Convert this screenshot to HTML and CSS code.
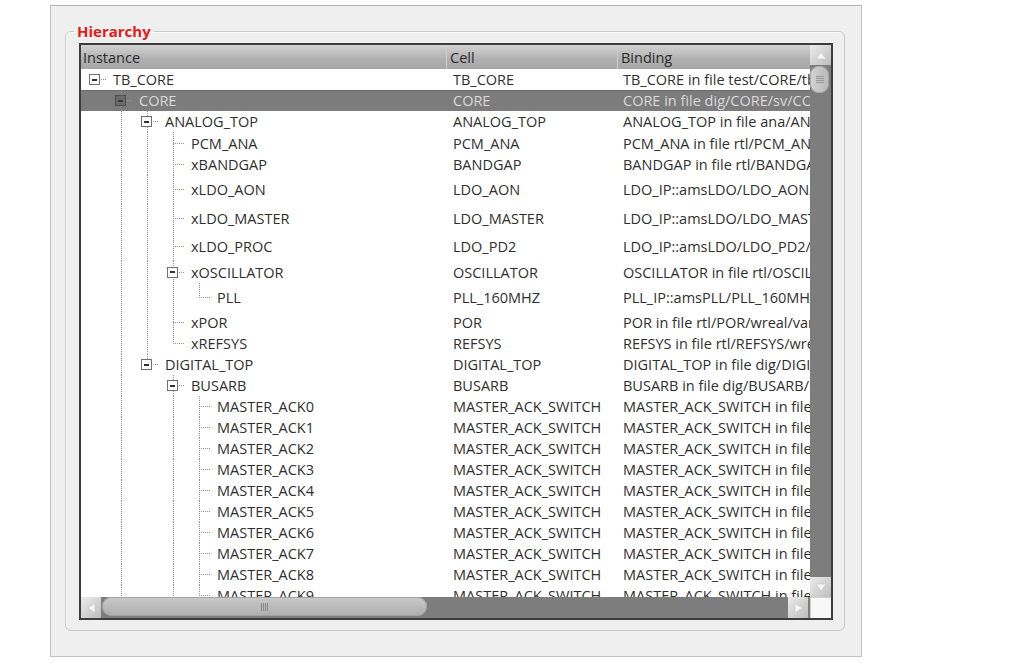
FILE: index.html
```html
<!DOCTYPE html>
<html lang="en">
<head>
  <meta charset="UTF-8" />
  <title>Hierarchy</title>
  <link rel="stylesheet" href="styles.css">
</head>
<body>

  <div class="window">
    <fieldset class="group">
      <legend>Hierarchy</legend>

      <div class="tree">
        <div class="viewport">
          <div class="header">
            <div class="hc inst">Instance</div>
            <div class="hc cell">Cell</div>
            <div class="hc bind">Binding</div>
          </div>

          <div class="row">
            <div class="c inst"><span class="g h"><i class="box"></i></span><span class="name">TB_CORE</span></div>
            <div class="c cell">TB_CORE</div>
            <div class="c bind">TB_CORE in file test/CORE/tb_core.sv</div>
          </div>
          <div class="row sel">
            <div class="c inst"><span class="g"></span><span class="g t"><i class="box"></i></span><span class="name">CORE</span></div>
            <div class="c cell">CORE</div>
            <div class="c bind">CORE in file dig/CORE/sv/CORE.sv</div>
          </div>
          <div class="row">
            <div class="c inst"><span class="g"></span><span class="g v"></span><span class="g t"><i class="box"></i></span><span class="name">ANALOG_TOP</span></div>
            <div class="c cell">ANALOG_TOP</div>
            <div class="c bind">ANALOG_TOP in file ana/ANALOG_TOP.sv</div>
          </div>
          <div class="row h22">
            <div class="c inst"><span class="g"></span><span class="g v"></span><span class="g v"></span><span class="g t"></span><span class="name">PCM_ANA</span></div>
            <div class="c cell">PCM_ANA</div>
            <div class="c bind">PCM_ANA in file rtl/PCM_ANA/pcm_ana.sv</div>
          </div>
          <div class="row">
            <div class="c inst"><span class="g"></span><span class="g v"></span><span class="g v"></span><span class="g t"></span><span class="name">xBANDGAP</span></div>
            <div class="c cell">BANDGAP</div>
            <div class="c bind">BANDGAP in file rtl/BANDGAP/bandgap.sv</div>
          </div>
          <div class="row h29">
            <div class="c inst"><span class="g"></span><span class="g v"></span><span class="g v"></span><span class="g t"></span><span class="name">xLDO_AON</span></div>
            <div class="c cell">LDO_AON</div>
            <div class="c bind">LDO_IP::amsLDO/LDO_AON/schematic</div>
          </div>
          <div class="row h28">
            <div class="c inst"><span class="g"></span><span class="g v"></span><span class="g v"></span><span class="g t"></span><span class="name">xLDO_MASTER</span></div>
            <div class="c cell">LDO_MASTER</div>
            <div class="c bind">LDO_IP::amsLDO/LDO_MASTER/schematic</div>
          </div>
          <div class="row h29">
            <div class="c inst"><span class="g"></span><span class="g v"></span><span class="g v"></span><span class="g t"></span><span class="name">xLDO_PROC</span></div>
            <div class="c cell">LDO_PD2</div>
            <div class="c bind">LDO_IP::amsLDO/LDO_PD2/schematic</div>
          </div>
          <div class="row h22">
            <div class="c inst"><span class="g"></span><span class="g v"></span><span class="g v"></span><span class="g t"><i class="box"></i></span><span class="name">xOSCILLATOR</span></div>
            <div class="c cell">OSCILLATOR</div>
            <div class="c bind">OSCILLATOR in file rtl/OSCILLATOR/osc.sv</div>
          </div>
          <div class="row h28">
            <div class="c inst"><span class="g"></span><span class="g v"></span><span class="g v"></span><span class="g v"></span><span class="g l"></span><span class="name">PLL</span></div>
            <div class="c cell">PLL_160MHZ</div>
            <div class="c bind">PLL_IP::amsPLL/PLL_160MHZ/schematic</div>
          </div>
          <div class="row h22">
            <div class="c inst"><span class="g"></span><span class="g v"></span><span class="g v"></span><span class="g t"></span><span class="name">xPOR</span></div>
            <div class="c cell">POR</div>
            <div class="c bind">POR in file rtl/POR/wreal/vams/por.sv</div>
          </div>
          <div class="row">
            <div class="c inst"><span class="g"></span><span class="g v"></span><span class="g v"></span><span class="g l"></span><span class="name">xREFSYS</span></div>
            <div class="c cell">REFSYS</div>
            <div class="c bind">REFSYS in file rtl/REFSYS/wreal/refsys.sv</div>
          </div>
          <div class="row">
            <div class="c inst"><span class="g"></span><span class="g v"></span><span class="g l"><i class="box"></i></span><span class="name">DIGITAL_TOP</span></div>
            <div class="c cell">DIGITAL_TOP</div>
            <div class="c bind">DIGITAL_TOP in file dig/DIGITAL_TOP.sv</div>
          </div>
          <div class="row">
            <div class="c inst"><span class="g"></span><span class="g v"></span><span class="g"></span><span class="g t"><i class="box"></i></span><span class="name">BUSARB</span></div>
            <div class="c cell">BUSARB</div>
            <div class="c bind">BUSARB in file dig/BUSARB/busarb.sv</div>
          </div>
          <div class="row">
            <div class="c inst"><span class="g"></span><span class="g v"></span><span class="g"></span><span class="g v"></span><span class="g t"></span><span class="name">MASTER_ACK0</span></div>
            <div class="c cell">MASTER_ACK_SWITCH</div>
            <div class="c bind">MASTER_ACK_SWITCH in file dig/BUSARB/ack.sv</div>
          </div>
          <div class="row">
            <div class="c inst"><span class="g"></span><span class="g v"></span><span class="g"></span><span class="g v"></span><span class="g t"></span><span class="name">MASTER_ACK1</span></div>
            <div class="c cell">MASTER_ACK_SWITCH</div>
            <div class="c bind">MASTER_ACK_SWITCH in file dig/BUSARB/ack.sv</div>
          </div>
          <div class="row">
            <div class="c inst"><span class="g"></span><span class="g v"></span><span class="g"></span><span class="g v"></span><span class="g t"></span><span class="name">MASTER_ACK2</span></div>
            <div class="c cell">MASTER_ACK_SWITCH</div>
            <div class="c bind">MASTER_ACK_SWITCH in file dig/BUSARB/ack.sv</div>
          </div>
          <div class="row">
            <div class="c inst"><span class="g"></span><span class="g v"></span><span class="g"></span><span class="g v"></span><span class="g t"></span><span class="name">MASTER_ACK3</span></div>
            <div class="c cell">MASTER_ACK_SWITCH</div>
            <div class="c bind">MASTER_ACK_SWITCH in file dig/BUSARB/ack.sv</div>
          </div>
          <div class="row">
            <div class="c inst"><span class="g"></span><span class="g v"></span><span class="g"></span><span class="g v"></span><span class="g t"></span><span class="name">MASTER_ACK4</span></div>
            <div class="c cell">MASTER_ACK_SWITCH</div>
            <div class="c bind">MASTER_ACK_SWITCH in file dig/BUSARB/ack.sv</div>
          </div>
          <div class="row">
            <div class="c inst"><span class="g"></span><span class="g v"></span><span class="g"></span><span class="g v"></span><span class="g t"></span><span class="name">MASTER_ACK5</span></div>
            <div class="c cell">MASTER_ACK_SWITCH</div>
            <div class="c bind">MASTER_ACK_SWITCH in file dig/BUSARB/ack.sv</div>
          </div>
          <div class="row">
            <div class="c inst"><span class="g"></span><span class="g v"></span><span class="g"></span><span class="g v"></span><span class="g t"></span><span class="name">MASTER_ACK6</span></div>
            <div class="c cell">MASTER_ACK_SWITCH</div>
            <div class="c bind">MASTER_ACK_SWITCH in file dig/BUSARB/ack.sv</div>
          </div>
          <div class="row">
            <div class="c inst"><span class="g"></span><span class="g v"></span><span class="g"></span><span class="g v"></span><span class="g t"></span><span class="name">MASTER_ACK7</span></div>
            <div class="c cell">MASTER_ACK_SWITCH</div>
            <div class="c bind">MASTER_ACK_SWITCH in file dig/BUSARB/ack.sv</div>
          </div>
          <div class="row">
            <div class="c inst"><span class="g"></span><span class="g v"></span><span class="g"></span><span class="g v"></span><span class="g t"></span><span class="name">MASTER_ACK8</span></div>
            <div class="c cell">MASTER_ACK_SWITCH</div>
            <div class="c bind">MASTER_ACK_SWITCH in file dig/BUSARB/ack.sv</div>
          </div>
          <div class="row">
            <div class="c inst"><span class="g"></span><span class="g v"></span><span class="g"></span><span class="g v"></span><span class="g t"></span><span class="name">MASTER_ACK9</span></div>
            <div class="c cell">MASTER_ACK_SWITCH</div>
            <div class="c bind">MASTER_ACK_SWITCH in file dig/BUSARB/ack.sv</div>
          </div>
        </div>

        <!-- vertical scrollbar -->
        <div class="vscroll">
          <div class="sbtn">
            <svg width="12" height="9" viewBox="0 0 12 9"><polygon points="6,1 11,8 1,8" fill="#f6f6f6" stroke="#c4c4c4" stroke-width="0.6"/></svg>
          </div>
          <div class="vhandle"><span class="grip-h"></span></div>
          <div class="track"></div>
          <div class="sbtn">
            <svg width="12" height="9" viewBox="0 0 12 9"><polygon points="1,1 11,1 6,8" fill="#f6f6f6" stroke="#c4c4c4" stroke-width="0.6"/></svg>
          </div>
        </div>

        <!-- horizontal scrollbar -->
        <div class="hscroll">
          <div class="sbtn">
            <svg width="9" height="12" viewBox="0 0 9 12"><polygon points="1,6 8,1 8,11" fill="#f6f6f6" stroke="#c4c4c4" stroke-width="0.6"/></svg>
          </div>
          <div class="hhandle"><span class="grip-v"></span></div>
          <div class="track"></div>
          <div class="sbtn">
            <svg width="9" height="12" viewBox="0 0 9 12"><polygon points="1,1 8,6 1,11" fill="#f6f6f6" stroke="#c4c4c4" stroke-width="0.6"/></svg>
          </div>
        </div>
        <div class="corner"></div>
      </div>
    </fieldset>
  </div>

</body>
</html>
```

FILE: styles.css
```css
body {
  margin: 0;
  background: #fff;
  font-family: 'Open Sans', 'DejaVu Sans', sans-serif;
  color: #2f2f2f;
}

.window {
  box-sizing: border-box;
  width: 812px;
  height: 652px;
  margin: 5px 0 0 50px;
  padding: 17px 0 0 14px;
  background: #efefef;
  border: 1px solid #c2c2c2;
  border-top-color: #b4b4b4;
}

.group {
  box-sizing: border-box;
  width: 780px;
  height: 608px;
  margin: 0;
  padding: 4px 11px 0 13px;
  border: 1px solid #c9c9c9;
  border-radius: 6px;
  box-shadow: inset 1px 1px 0 #fafafa;
}

.group legend {
  margin-left: -5px;
  padding: 0 3px;
  color: #e41b1b;
  font-weight: bold;
  font-size: 15px;
  line-height: 16px;
}

/* tree widget */
.tree {
  box-sizing: border-box;
  width: 754px;
  height: 577px;
  display: grid;
  grid-template-columns: 729px 21px;
  grid-template-rows: 552px 21px;
  border: 2px solid #3d3d3d;
  background: #fff;
}

.viewport {
  overflow: hidden;
  font-size: 14.5px;
}

.header {
  display: flex;
  height: 24px;
  background: linear-gradient(#d2d2d2, #b0b0b0 60%, #a6a6a6);
  color: #2a2a2a;
}

.hc {
  display: flex;
  align-items: center;
  padding-left: 2px;
  box-sizing: border-box;
}

.hc.cell, .hc.bind {
  border-left: 1px solid #cfcfcf;
  padding-left: 3px;
}

.row {
  display: flex;
  height: 21px;
}

.row.h22 { height: 22px; }
.row.h28 { height: 28px; }
.row.h29 { height: 29px; }

.row.sel {
  background: #7c7c7c;
  color: #d9d9d9;
  box-shadow: inset 0 1px 0 #6a6a6a;
}

.c {
  display: flex;
  align-items: center;
  white-space: nowrap;
  overflow: hidden;
  box-sizing: border-box;
}

.inst { width: 365px; flex: none; }
.cell { width: 171px; flex: none; padding-left: 7px; }
.bind { flex: 1; min-width: 0; padding-left: 6px; }

.name { margin-left: 6px; }

/* branch guides */
.g {
  flex: none;
  width: 26px;
  align-self: stretch;
  display: flex;
  align-items: center;
  background-repeat: no-repeat;
}

.g.v {
  background-image: repeating-linear-gradient(#949494 0 1px, transparent 1px 2px);
  background-size: 1px 100%;
  background-position: 14px 0;
}

.g.t {
  background-image:
    repeating-linear-gradient(#949494 0 1px, transparent 1px 2px),
    repeating-linear-gradient(to right, #949494 0 1px, transparent 1px 2px);
  background-size: 1px 100%, 12px 1px;
  background-position: 14px 0, 14px 50%;
}

.g.l {
  background-image:
    repeating-linear-gradient(#949494 0 1px, transparent 1px 2px),
    repeating-linear-gradient(to right, #949494 0 1px, transparent 1px 2px);
  background-size: 1px 50%, 12px 1px;
  background-position: 14px 0, 14px 50%;
}

.g.h {
  background-image: repeating-linear-gradient(to right, #949494 0 1px, transparent 1px 2px);
  background-size: 12px 1px;
  background-position: 14px 50%;
}

.box {
  width: 9px;
  height: 9px;
  margin-left: 8px;
  border: 1px solid #6f6f6f;
  background: #fff linear-gradient(#333, #333) no-repeat center / 5px 2px;
}

.sel .box {
  border-color: #4e4e4e;
  background: #6a6a6a linear-gradient(#3a3a3a, #3a3a3a) no-repeat center / 5px 2px;
}

/* scrollbars */
.vscroll, .hscroll {
  display: flex;
  background: #7d7d7d;
}

.vscroll { flex-direction: column; }

.track { flex: 1; }

.sbtn {
  flex: none;
  width: 21px;
  height: 21px;
  display: flex;
  align-items: center;
  justify-content: center;
  background: linear-gradient(135deg, #ececec, #bdbdbd);
}

.vscroll .sbtn { height: 20px; }
.hscroll .sbtn { width: 20px; }
.hscroll .sbtn:last-child { margin-right: 2px; }

.vhandle {
  height: 27px;
  margin: 1px 2px 0 0;
  border-radius: 9px;
  background: linear-gradient(to right, #d3d3d3, #b9b9b9);
  box-shadow: inset 0 0 0 1px #a6a6a6;
  display: flex;
  align-items: center;
  justify-content: center;
}

.grip-h {
  width: 8px;
  height: 7px;
  background: repeating-linear-gradient(#999 0 1px, transparent 1px 2px);
}

.hhandle {
  width: 325px;
  margin: 0 0 2px 1px;
  border-radius: 10px;
  background: linear-gradient(#cacaca, #adadad);
  box-shadow: inset 0 0 0 1px #a3a3a3;
  display: flex;
  align-items: center;
  justify-content: center;
}

.grip-v {
  width: 7px;
  height: 8px;
  background: repeating-linear-gradient(to right, #888 0 1px, transparent 1px 2px);
}

.corner {
  background: #f8f8f8;
  box-shadow: inset 1px 1px 0 #cfcfcf;
}
```
